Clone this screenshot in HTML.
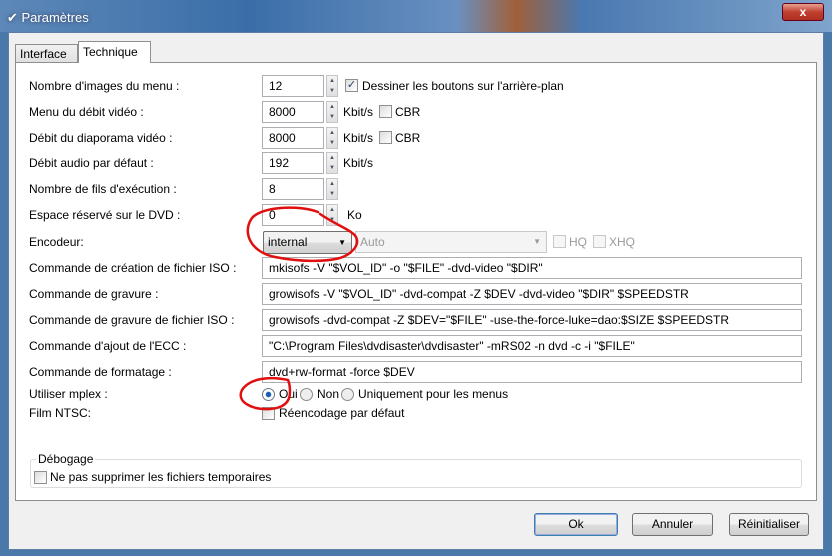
<!DOCTYPE html><html><head><meta charset="utf-8"><style>
*{margin:0;padding:0;box-sizing:border-box}
body{width:832px;height:556px;overflow:hidden;position:relative;font-family:"Liberation Sans",sans-serif;font-size:12px;color:#000;background:#4a78a8}
.a{position:absolute;white-space:nowrap}
.title{left:0;top:0;width:832px;height:32px;background:linear-gradient(90deg,#5d88b8,#3a6ea8 30%,#6a90c0 55%,#a0603a 62%,#4a78b0 70%,#7fa4cc);}
.client{left:8px;top:32px;width:816px;height:518px;background:#f0f0f0;border:1px solid #5a7ea8}
.pane{left:15px;top:62px;width:802px;height:439px;background:#fff;border:1px solid #8e8f8f}
.tab{border:1px solid #8e8f8f;border-bottom:none;padding:0 4px;font-size:12px}
.lbl{left:29px}
.in{background:#fff;border:1px solid #abadb3;height:22px;padding-left:6px;line-height:20px}
.spin{width:12px;height:22px;border:1px solid #c5c5c5;background:linear-gradient(#f4f4f4,#e0e0e0);font-size:6px;color:#456;text-align:center;line-height:10px}
.cb{width:13px;height:13px;border:1px solid #8f8f8f;background:linear-gradient(135deg,#ddd,#fff)}
.btn{height:23px;border:1px solid #707070;border-radius:3px;background:linear-gradient(#f2f2f2 50%,#dddddd 50%,#cfcfcf);text-align:center;line-height:21px}
</style></head><body>
<div class="a title"></div>
<div class="a" style="left:7px;top:10px;color:#fff;font-size:13px;text-shadow:0 0 4px #335">✔ Paramètres</div>
<div class="a" style="left:782px;top:3px;width:42px;height:18px;background:linear-gradient(#e8a090,#c04030 50%,#b03020);border:1px solid #602;border-radius:3px;color:#fff;text-align:center;font-weight:bold;line-height:16px">x</div>
<div class="a client"></div>
<div class="a pane"></div>
<div class="a tab" style="left:15px;top:44px;height:18px;width:63px;background:linear-gradient(#f2f2f2,#e0e0e0);line-height:18px">Interface</div>
<div class="a tab" style="left:78px;top:41px;height:22px;width:73px;background:#fff;line-height:20px">Technique</div>

<div class="a lbl" style="top:79px">Nombre d'images du menu :</div>
<div class="a lbl" style="top:105px">Menu du débit vidéo :</div>
<div class="a lbl" style="top:131px">Débit du diaporama vidéo :</div>
<div class="a lbl" style="top:156px">Débit audio par défaut :</div>
<div class="a lbl" style="top:182px">Nombre de fils d'exécution :</div>
<div class="a lbl" style="top:208px">Espace réservé sur le DVD :</div>
<div class="a lbl" style="top:235px">Encodeur:</div>
<div class="a lbl" style="top:261px">Commande de création de fichier ISO :</div>
<div class="a lbl" style="top:287px">Commande de gravure :</div>
<div class="a lbl" style="top:313px">Commande de gravure de fichier ISO :</div>
<div class="a lbl" style="top:339px">Commande d'ajout de l'ECC :</div>
<div class="a lbl" style="top:365px">Commande de formatage :</div>
<div class="a lbl" style="top:387px">Utiliser mplex :</div>
<div class="a lbl" style="top:406px">Film NTSC:</div>

<div class="a in" style="left:262px;top:75px;width:62px">12</div><div class="a spin" style="left:326px;top:75px">▲<br>▼</div>
<div class="a cb" style="left:345px;top:79px;color:#246;font-size:11px;line-height:11px;text-align:center">✓</div><div class="a" style="left:362px;top:79px">Dessiner les boutons sur l'arrière-plan</div>
<div class="a in" style="left:262px;top:101px;width:62px">8000</div><div class="a spin" style="left:326px;top:101px">▲<br>▼</div>
<div class="a" style="left:343px;top:105px">Kbit/s</div><div class="a cb" style="left:379px;top:105px"></div><div class="a" style="left:395px;top:105px">CBR</div>
<div class="a in" style="left:262px;top:127px;width:62px">8000</div><div class="a spin" style="left:326px;top:127px">▲<br>▼</div>
<div class="a" style="left:343px;top:131px">Kbit/s</div><div class="a cb" style="left:379px;top:131px"></div><div class="a" style="left:395px;top:131px">CBR</div>
<div class="a in" style="left:262px;top:152px;width:62px">192</div><div class="a spin" style="left:326px;top:152px">▲<br>▼</div>
<div class="a" style="left:343px;top:156px">Kbit/s</div>
<div class="a in" style="left:262px;top:178px;width:62px">8</div><div class="a spin" style="left:326px;top:178px">▲<br>▼</div>
<div class="a in" style="left:262px;top:204px;width:62px">0</div><div class="a spin" style="left:326px;top:204px">▲<br>▼</div>
<div class="a" style="left:347px;top:208px">Ko</div>
<div class="a btn" style="left:263px;top:231px;width:89px;text-align:left;padding-left:4px;border-radius:2px">internal<span style="position:absolute;right:5px;top:0;font-size:8px">▼</span></div>
<div class="a" style="left:355px;top:231px;width:192px;height:22px;border:1px solid #c8c8c8;background:#f4f4f4;color:#9a9a9a;padding-left:4px;line-height:20px">Auto<span style="position:absolute;right:5px;font-size:8px">▼</span></div>
<div class="a cb" style="left:553px;top:235px;border-color:#c8c8c8;background:#f6f6f6"></div><div class="a" style="left:569px;top:235px;color:#9a9a9a">HQ</div>
<div class="a cb" style="left:593px;top:235px;border-color:#c8c8c8;background:#f6f6f6"></div><div class="a" style="left:609px;top:235px;color:#9a9a9a">XHQ</div>

<div class="a in" style="left:262px;top:257px;width:540px">mkisofs -V "$VOL_ID" -o "$FILE" -dvd-video "$DIR"</div>
<div class="a in" style="left:262px;top:283px;width:540px">growisofs -V "$VOL_ID" -dvd-compat -Z $DEV -dvd-video "$DIR" $SPEEDSTR</div>
<div class="a in" style="left:262px;top:309px;width:540px">growisofs -dvd-compat -Z $DEV="$FILE" -use-the-force-luke=dao:$SIZE $SPEEDSTR</div>
<div class="a in" style="left:262px;top:335px;width:540px">"C:\Program Files\dvdisaster\dvdisaster" -mRS02 -n dvd -c -i "$FILE"</div>
<div class="a in" style="left:262px;top:361px;width:540px">dvd+rw-format -force $DEV</div>

<div class="a" style="left:262px;top:388px;width:13px;height:13px;border-radius:50%;border:1px solid #6a7a8a;background:radial-gradient(#1a5fb0 30%,#fff 40%)"></div><div class="a" style="left:279px;top:387px">Oui</div>
<div class="a" style="left:300px;top:388px;width:13px;height:13px;border-radius:50%;border:1px solid #8a8a8a;background:#eee"></div><div class="a" style="left:317px;top:387px">Non</div>
<div class="a" style="left:341px;top:388px;width:13px;height:13px;border-radius:50%;border:1px solid #8a8a8a;background:#eee"></div><div class="a" style="left:358px;top:387px">Uniquement pour les menus</div>
<div class="a cb" style="left:262px;top:407px"></div><div class="a" style="left:279px;top:406px">Réencodage par défaut</div>

<div class="a" style="left:30px;top:459px;width:772px;height:29px;border:1px solid #dcdcdc;border-radius:3px"></div>
<div class="a" style="left:36px;top:452px;background:#fff;padding:0 2px">Débogage</div>
<div class="a cb" style="left:34px;top:471px"></div><div class="a" style="left:50px;top:470px">Ne pas supprimer les fichiers temporaires</div>

<div class="a btn" style="left:534px;top:513px;width:84px;border-color:#3c7fb1;box-shadow:inset 0 0 0 1px #9ad">Ok</div>
<div class="a btn" style="left:632px;top:513px;width:81px">Annuler</div>
<div class="a btn" style="left:729px;top:513px;width:80px">Réinitialiser</div>

<svg class="a" style="left:0;top:0" width="832" height="556"><g fill="none" stroke="#e01010" stroke-width="2.5" stroke-linecap="round">
<path d="M318 212 C300 205 262 206 252 218 C242 232 250 252 275 257 C300 262 325 262 340 258 C352 254 360 245 356 237 C352 230 336 225 320 214"/>
<path d="M288 380 C270 376 250 378 242 390 C236 402 252 410 270 409 C284 408 290 402 290 392 C290 386 289 382 288 380"/>
</g></svg>
</body></html>
